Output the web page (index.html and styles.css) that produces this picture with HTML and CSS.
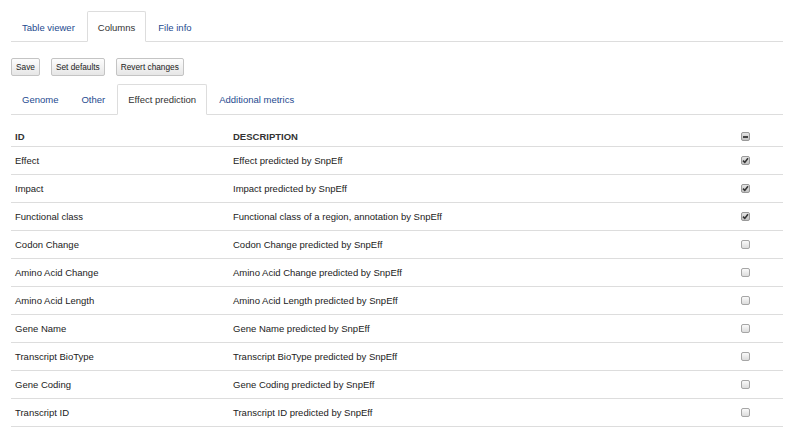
FILE: index.html
```html
<!DOCTYPE html>
<html>
<head>
<meta charset="utf-8">
<link rel="stylesheet" href="styles.css">
</head>
<body>
<div class="page">
  <ul class="tabs">
    <li class="tab"><a>Table viewer</a></li>
    <li class="tab active"><a>Columns</a></li>
    <li class="tab"><a>File info</a></li>
  </ul>
  <div class="toolbar">
    <button class="btn">Save</button>
    <button class="btn">Set defaults</button>
    <button class="btn">Revert changes</button>
  </div>
  <ul class="tabs sub">
    <li class="tab"><a>Genome</a></li>
    <li class="tab"><a>Other</a></li>
    <li class="tab active"><a>Effect prediction</a></li>
    <li class="tab"><a>Additional metrics</a></li>
  </ul>
  <table class="cols">
    <colgroup><col class="c-id"><col class="c-desc"><col class="c-chk"></colgroup>
    <thead>
      <tr><th>ID</th><th>DESCRIPTION</th><th><span class="cb ind"><span class="bar"></span></span></th></tr>
    </thead>
    <tbody>
      <tr><td>Effect</td><td>Effect predicted by SnpEff</td><td><span class="cb on"><svg viewBox="0 0 9 9" width="9" height="9"><path d="M2 4.6 L3.8 6.4 L7 2.2" fill="none" stroke="#333" stroke-width="1.6"/></svg></span></td></tr>
      <tr><td>Impact</td><td>Impact predicted by SnpEff</td><td><span class="cb on"><svg viewBox="0 0 9 9" width="9" height="9"><path d="M2 4.6 L3.8 6.4 L7 2.2" fill="none" stroke="#333" stroke-width="1.6"/></svg></span></td></tr>
      <tr><td>Functional class</td><td>Functional class of a region, annotation by SnpEff</td><td><span class="cb on"><svg viewBox="0 0 9 9" width="9" height="9"><path d="M2 4.6 L3.8 6.4 L7 2.2" fill="none" stroke="#333" stroke-width="1.6"/></svg></span></td></tr>
      <tr><td>Codon Change</td><td>Codon Change predicted by SnpEff</td><td><span class="cb"></span></td></tr>
      <tr><td>Amino Acid Change</td><td>Amino Acid Change predicted by SnpEff</td><td><span class="cb"></span></td></tr>
      <tr><td>Amino Acid Length</td><td>Amino Acid Length predicted by SnpEff</td><td><span class="cb"></span></td></tr>
      <tr><td>Gene Name</td><td>Gene Name predicted by SnpEff</td><td><span class="cb"></span></td></tr>
      <tr><td>Transcript BioType</td><td>Transcript BioType predicted by SnpEff</td><td><span class="cb"></span></td></tr>
      <tr><td>Gene Coding</td><td>Gene Coding predicted by SnpEff</td><td><span class="cb"></span></td></tr>
      <tr><td>Transcript ID</td><td>Transcript ID predicted by SnpEff</td><td><span class="cb"></span></td></tr>
    </tbody>
  </table>
</div>
</body>
</html>
```
FILE: styles.css
```css
html, body {
  margin: 0;
  padding: 0;
  background: #fff;
}
body {
  font-family: "Liberation Sans", Arial, sans-serif;
  font-size: 9.5px;
  color: #333;
}
.page {
  padding: 11px 10px 0 11px;
}
.tabs {
  list-style: none;
  margin: 0;
  padding: 0;
  display: flex;
  border-bottom: 1px solid #ddd;
  height: 30px;
}
.tab {
  margin-right: 1px;
  margin-bottom: -1px;
}
.tab a {
  display: flex;
  align-items: center;
  height: 30px;
  box-sizing: border-box;
  padding: 2px 10px 0 10px;
  border: 1px solid transparent;
  border-radius: 2px 2px 0 0;
  color: #254a8f;
  line-height: 11px;
}
.sub .tab a {
  padding-top: 0;
}
.tab.active a {
  color: #333;
  background: #fff;
  border-color: #ddd;
  border-bottom-color: #fff;
  height: 31px;
}
.toolbar {
  display: flex;
  gap: 11px;
  margin-top: 16px;
  margin-bottom: 8px;
}
.btn {
  font-family: "Liberation Sans", Arial, sans-serif;
  font-size: 8.3px;
  color: #222;
  height: 18px;
  padding: 0 4px;
  margin: 0;
  border: 1px solid #c4c4c4;
  border-radius: 2px;
  background: linear-gradient(#fdfdfd, #e6e6e6);
  line-height: 16px;
}
.cols {
  width: 772px;
  border-collapse: collapse;
  margin-top: 12px;
  table-layout: fixed;
}
.c-id { width: 218px; }
.c-desc { width: 508px; }
.c-chk { width: 46px; }
.cols th {
  text-align: left;
  font-weight: bold;
  padding: 4px 4px;
  height: 11px;
  line-height: 11px;
  border-bottom: 1px solid #ddd;
  color: #333;
}
.cols td {
  padding: 0 4px 1px 4px;
  height: 26px;
  line-height: 11px;
  border-bottom: 1px solid #ddd;
  vertical-align: middle;
  color: #222;
}
.cb {
  display: block;
  width: 9px;
  height: 9px;
  box-sizing: border-box;
  border: 1px solid #a6a6a6;
  border-radius: 2px;
  background: linear-gradient(#fafafa, #dcdcdc);
  position: relative;
}
.cb svg {
  position: absolute;
  left: -1px;
  top: -1px;
}
.cb.on, .cb.ind {
  background: linear-gradient(#e4e4e4, #c2c2c2);
  border-color: #999;
}
.cb .bar {
  position: absolute;
  left: 1px;
  right: 1px;
  top: 2.5px;
  height: 2px;
  background: #444;
}
```
